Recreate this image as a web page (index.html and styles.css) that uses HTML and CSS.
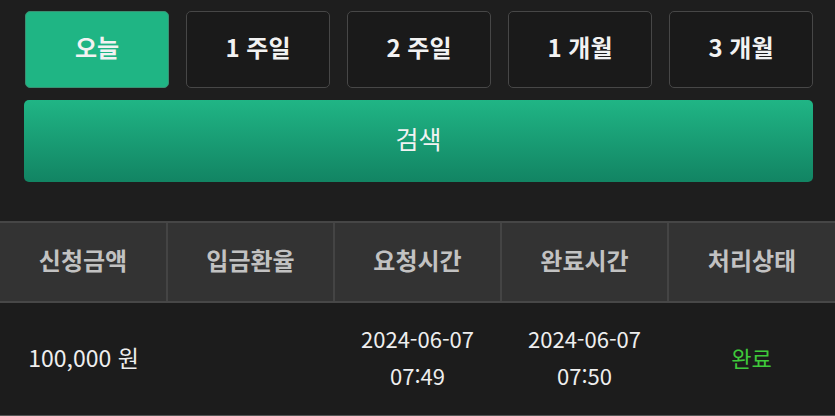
FILE: index.html
```html
<!DOCTYPE html>
<html lang="ko">
<head>
    <meta charset="UTF-8">
    <meta name="viewport" content="width=device-width, initial-scale=1.0">
    <title>입금내역</title>
    <link rel="stylesheet" href="styles.css">
</head>
<body>

    <div class="search-box">
        <div class="period-list">
            <button type="button" class="period active">오늘</button>
            <button type="button" class="period">1 주일</button>
            <button type="button" class="period">2 주일</button>
            <button type="button" class="period">1 개월</button>
            <button type="button" class="period">3 개월</button>
        </div>
        <button type="button" class="search-btn">검색</button>
    </div>

    <table class="history">
        <thead>
            <tr>
                <th>신청금액</th>
                <th>입금환율</th>
                <th>요청시간</th>
                <th>완료시간</th>
                <th>처리상태</th>
            </tr>
        </thead>
        <tbody>
            <tr>
                <td>100,000 원</td>
                <td></td>
                <td>2024-06-07<br>07:49</td>
                <td>2024-06-07<br>07:50</td>
                <td class="done">완료</td>
            </tr>
        </tbody>
    </table>

</body>
</html>
```

FILE: styles.css
```css
body {
    margin: 0;
    background-color: #1e1e1e;
    font-family: "Noto Sans CJK KR", "Noto Sans", sans-serif;
    color: #eeeeee;
}

.search-box {
    padding: 11px 22px 0 24px;
    height: 210px;
    box-sizing: border-box;
}

.period-list {
    display: flex;
    gap: 17px;
    margin-left: 1px;
}

.period {
    flex: 1;
    height: 77px;
    padding: 0 0 6px;
    background-color: #1a1a1a;
    border: 1.5px solid #474747;
    border-radius: 5px;
    color: #f2f2f2;
    font-family: inherit;
    font-size: 24px;
    font-weight: bold;
    cursor: pointer;
}

.period.active {
    background-color: #1fb584;
    border-color: #3a8f72;
}

.search-btn {
    display: block;
    width: 100%;
    height: 82px;
    margin-top: 12px;
    padding: 0 0 6px;
    border: none;
    border-radius: 5px;
    background: linear-gradient(to bottom, #20b585, #128463);
    color: #f2f2f2;
    font-family: inherit;
    font-size: 25px;
    cursor: pointer;
}

.history {
    width: 100%;
    margin-top: 11px;
    border-collapse: collapse;
    table-layout: fixed;
}

.history th {
    height: 72px;
    padding: 0 0 6px;
    background-color: #333333;
    border-top: 2px solid #464646;
    border-bottom: 2px solid #474747;
    border-left: 2px solid #444444;
    color: #c2c2c2;
    font-size: 24px;
    font-weight: bold;
}

.history th:first-child {
    border-left: none;
}

.history td {
    height: 108px;
    padding: 0 0 4px;
    background-color: #1c1c1c;
    border-bottom: 2px solid #555555;
    text-align: center;
    font-size: 22px;
    line-height: 37px;
}

.history td:first-child {
    font-size: 23px;
}

.history td.done {
    color: #3fc93b;
}
```
